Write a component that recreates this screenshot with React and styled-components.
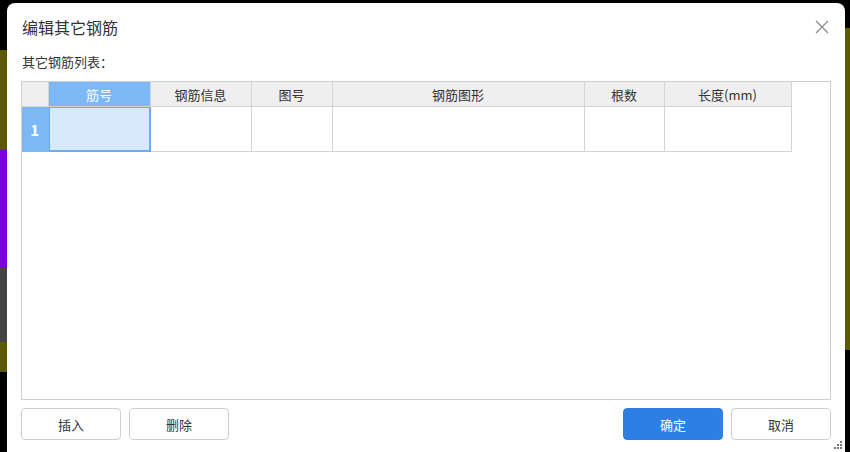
import React from "react";
import styled, { createGlobalStyle } from "styled-components";

const GlobalStyle = createGlobalStyle`
    html, body {
        margin: 0;
        padding: 0;
        width: 850px;
        height: 452px;
        overflow: hidden;
        background: #000;
        font-family: "Noto Sans CJK SC", "Noto Sans", sans-serif;
    }
`
const Backdrop = styled.div`
    display: grid;
    grid-template-columns: 7px 838px 5px;
    height: 452px;
`
const Strip = styled.div`
    background: ${props => props.bg};
`
const Dialog = styled.div`
    position: relative;
    margin-top: 3px;
    background: #fff;
    border-radius: 8px 8px 0 0;
    padding: 0 14px;
    display: flex;
    flex-direction: column;
    color: #333;
`
const TitleBar = styled.div`
    height: 48px;
    display: flex;
    align-items: center;
    justify-content: space-between;
    padding-left: 1px;
`
const Title = styled.div`
    font-size: 16px;
`
const CloseButton = styled.div`
    width: 16px;
    height: 16px;
    display: flex;
    margin-right: 1px;
`
const Label = styled.div`
    font-size: 13px;
    line-height: 22px;
    padding-left: 1px;
    margin-bottom: 8px;
`
const TableBox = styled.div`
    height: 317px;
    border: 1px solid #cfcfcf;
`
const Grid = styled.table`
    border-collapse: collapse;
    table-layout: fixed;
    font-size: 13px;
`
const HeadCell = styled.th`
    height: 24px;
    padding: 0;
    font-weight: normal;
    border: 1px solid #d4d4d4;
    border-top: none;
    background: ${props => props.active ? "#7db8f6" : "#efefef"};
    color: ${props => props.active ? "#fff" : "#333"};
    &:first-child {
        border-left: none;
    }
`
const RowHead = styled.td`
    height: 44px;
    padding: 0;
    border: 1px solid #7db8f6;
    border-left: none;
    background: #7db8f6;
    color: #fff;
    font-weight: bold;
    font-size: 15px;
    text-align: center;
`
const Cell = styled.td`
    padding: 0;
    border: 1px solid #d4d4d4;
    box-sizing: border-box;
    background: ${props => props.selected ? "#d7eafd" : "#fff"};
    box-shadow: ${props => props.selected ? "inset 0 0 0 1px #6aabf2" : "none"};
    ${props => props.selected && "border: 1px solid #6aabf2;"}
`
const Footer = styled.div`
    margin-top: 8px;
    display: flex;
    gap: 8px;
`
const Spacer = styled.div`
    flex-grow: 1;
`
const Button = styled.button`
    width: 100px;
    height: 32px;
    border-radius: 4px;
    font-family: inherit;
    font-size: 13px;
    border: 1px solid ${props => props.primary ? "#2e7fe3" : "#cfcfcf"};
    background: ${props => props.primary ? "#2e7fe3" : "#fff"};
    color: ${props => props.primary ? "#fff" : "#333"};
    padding: 0;
`
const Grip = styled.div`
    position: absolute;
    right: 2px;
    bottom: 2px;
    width: 10px;
    height: 10px;
    display: flex;
`

const columns = [
    { title: "", width: 26 },
    { title: "筋号", width: 102, active: true },
    { title: "钢筋信息", width: 101 },
    { title: "图号", width: 81 },
    { title: "钢筋图形", width: 252 },
    { title: "根数", width: 80 },
    { title: "长度(mm)", width: 127 },
]

export default function App() {
    return (
        <>
            <GlobalStyle />
            <Backdrop>
                <Strip bg="linear-gradient(#000 0 50px, #5b5a00 50px 150px, #7a00e0 150px 268px, #444 268px 342px, #5b5a00 342px 372px, #000 372px)" />
                <Dialog>
                    <TitleBar>
                        <Title>编辑其它钢筋</Title>
                        <CloseButton>
                            <svg width="16" height="16" viewBox="0 0 16 16">
                                <path d="M2 2 L14 14 M14 2 L2 14" stroke="#8a8a8a" strokeWidth="1.3" fill="none" />
                            </svg>
                        </CloseButton>
                    </TitleBar>
                    <Label>其它钢筋列表：</Label>
                    <TableBox>
                        <Grid>
                            <colgroup>
                                {columns.map((c, i) => <col key={i} style={{ width: c.width }} />)}
                            </colgroup>
                            <thead>
                                <tr>
                                    {columns.map((c, i) => (
                                        <HeadCell key={i} active={c.active}>{c.title}</HeadCell>
                                    ))}
                                </tr>
                            </thead>
                            <tbody>
                                <tr>
                                    <RowHead>1</RowHead>
                                    <Cell selected />
                                    <Cell />
                                    <Cell />
                                    <Cell />
                                    <Cell />
                                    <Cell />
                                </tr>
                            </tbody>
                        </Grid>
                    </TableBox>
                    <Footer>
                        <Button>插入</Button>
                        <Button>删除</Button>
                        <Spacer />
                        <Button primary>确定</Button>
                        <Button>取消</Button>
                    </Footer>
                    <Grip>
                        <svg width="10" height="10" viewBox="0 0 10 10" fill="#777">
                            <rect x="7" y="1" width="2" height="2" />
                            <rect x="4" y="4" width="2" height="2" />
                            <rect x="7" y="4" width="2" height="2" />
                            <rect x="1" y="7" width="2" height="2" />
                            <rect x="4" y="7" width="2" height="2" />
                            <rect x="7" y="7" width="2" height="2" />
                        </svg>
                    </Grip>
                </Dialog>
                <Strip bg="linear-gradient(#000 0 28px, #5b5a00 28px 350px, #000 350px)" />
            </Backdrop>
        </>
    )
}
